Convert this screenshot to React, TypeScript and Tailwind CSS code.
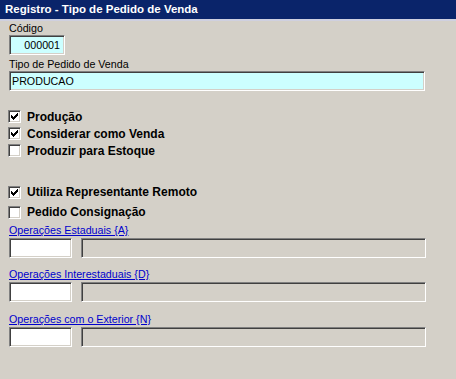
import React from "react"

const sunken =
  "border border-t-[#808080] border-l-[#808080] border-r-white border-b-white shadow-[inset_1px_1px_0_#404040,inset_-1px_-1px_0_#d4d0c8]"

function Check({ checked }: { checked: boolean }) {
  return (
    <div className={`w-[13px] h-[13px] bg-white flex items-center justify-center ${sunken}`}>
      {checked && (
        <svg width="7" height="7" viewBox="0 0 7 7" shapeRendering="crispEdges">
          <path
            d="M6 0h1v3h-1zM5 1h1v3h-1zM4 2h1v3h-1zM3 3h1v3h-1zM2 4h1v3h-1zM1 3h1v3h-1zM0 2h1v3h-1z"
            fill="#000"
          />
        </svg>
      )}
    </div>
  )
}

function CheckRow({ label, checked, h }: { label: string; checked: boolean; h: string }) {
  return (
    <div className={`flex items-center gap-[6px] -ml-px ${h}`}>
      <Check checked={checked} />
      <span className="text-[12px] font-bold text-black">{label}</span>
    </div>
  )
}

function OpGroup({ label, mt }: { label: string; mt: string }) {
  return (
    <div className={mt}>
      <div className="h-[14px] leading-[14px]">
        <a href="#" className="text-[10.7px] text-[#0000cc] underline">
          {label}
        </a>
      </div>
      <div className="mt-[2px] flex gap-[9px]">
        <div className={`w-[63px] h-[20px] bg-white ${sunken}`} />
        <div className={`w-[345px] h-[20px] bg-[#d4d0c8] ${sunken}`} />
      </div>
    </div>
  )
}

export default function App() {
  return (
    <div
      className="w-[456px] h-[379px] bg-[#d4d0c8] overflow-hidden text-black"
      style={{ fontFamily: '"Liberation Sans", Arial, sans-serif' }}
    >
      <div className="h-[21px] bg-[#0a246a] border-b-2 border-[#cfd0e0] px-[5px] text-white font-bold text-[11.5px] leading-[18px]">
        Registro - Tipo de Pedido de Venda
      </div>

      <div className="pl-[9px]">
        <div className="h-[14px] leading-[14px] text-[10.7px]">Código</div>
        <div
          className={`w-[56px] h-[20px] bg-[#ccffff] flex items-center justify-end pr-[4px] text-[10.7px] ${sunken}`}
        >
          000001
        </div>

        <div className="mt-[2px] h-[14px] leading-[14px] text-[10.7px]">Tipo de Pedido de Venda</div>
        <div className={`w-[416px] h-[20px] bg-[#ccffff] flex items-center pl-[2px] text-[10.7px] ${sunken}`}>
          PRODUCAO
        </div>

        <div className="mt-[17px]">
          <CheckRow label="Produção" checked h="h-[17px]" />
          <CheckRow label="Considerar como Venda" checked h="h-[17px]" />
          <CheckRow label="Produzir para Estoque" checked={false} h="h-[17px]" />
        </div>

        <div className="mt-[23px]">
          <CheckRow label="Utiliza Representante Remoto" checked h="h-[20px]" />
          <CheckRow label="Pedido Consignação" checked={false} h="h-[20px]" />
        </div>

        <OpGroup label="Operações Estaduais {A}" mt="mt-0" />
        <OpGroup label="Operações Interestaduais {D}" mt="mt-[8px]" />
        <OpGroup label="Operações com o Exterior {N}" mt="mt-[9px]" />
      </div>
    </div>
  )
}
